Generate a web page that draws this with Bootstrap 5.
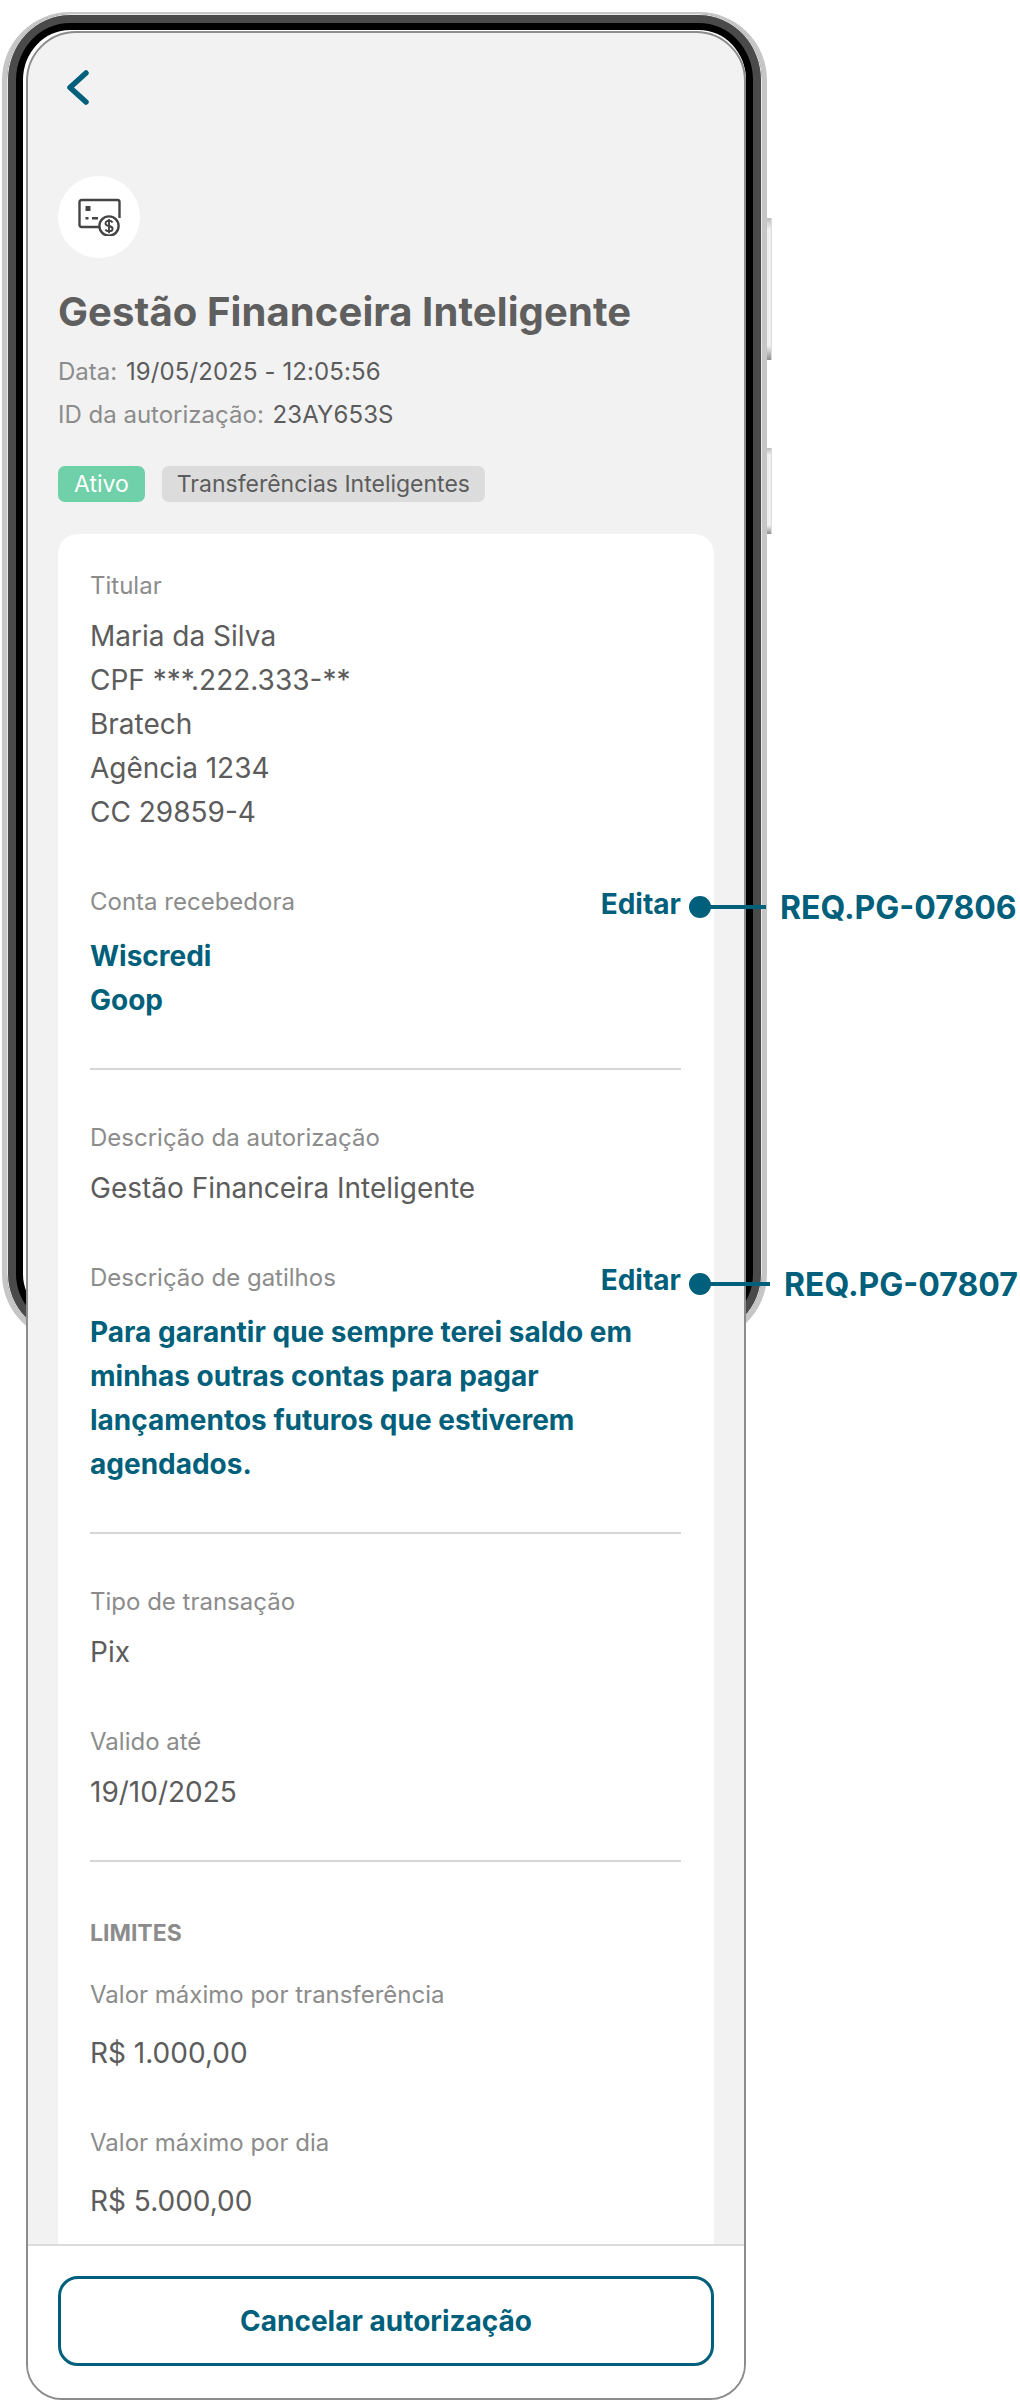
<!DOCTYPE html>
<html lang="pt-BR">
<head>
    <meta charset="UTF-8">
    <meta name="viewport" content="width=device-width, initial-scale=1.0">
    <title>Gestão Financeira Inteligente</title>
    <link href="https://cdn.jsdelivr.net/npm/bootstrap@5.3.3/dist/css/bootstrap.min.css" rel="stylesheet">
    <style>
        body { background: #fff; font-family: "Inter", "Liberation Sans", sans-serif; color: #5c5c5c; }
        .stage { position: relative; width: 1020px; height: 2400px; padding: 31px 0 0 26px; overflow: hidden; }
        .bezel { position: absolute; left: 2px; top: 12px; width: 765px; height: 1330px; border: 5px solid #c6c6c6; border-top-width: 2px; border-radius: 68px; box-shadow: inset 0 0 0 1px #e8e8e8, inset 0 0 0 9px #4a4a4a, inset 0 0 0 16px #000; }
        .side-key { position: absolute; left: 767px; width: 5px; background: linear-gradient(#bdbdbd, #f0f0f0 8%, #f0f0f0 90%, #8e8e8e); border-right: 1px solid #dcdcdc; }
        .side-key-a { top: 218px; height: 142px; }
        .side-key-b { top: 448px; height: 86px; }
        .screen { position: relative; width: 720px; height: 2369px; background: #f2f2f2; border: 2px solid #8c8c8c; border-radius: 50px 50px 36px 36px; overflow: hidden; }
        .screen-scroll { padding: 37px 30px 0; min-height: 0; overflow: hidden; }
        .back-icon { display: block; width: 23px; height: 35px; margin-left: 8px; }
        .icon-circle { width: 82px; height: 82px; margin-top: 71px; background: #fff; }
        .page-title { margin: 30px 0 0; font-size: 40px; line-height: 48px; font-weight: 700; letter-spacing: .1px; color: #5f5f5f; }
        .meta { margin-top: 14px; font-size: 24px; line-height: 43px; color: #5c5c5c; }
        .meta span { margin-right: 2px; color: #8c8c8c; }
        .meta b { font-weight: 400; letter-spacing: .1px; }
        .tags { margin-top: 30px; gap: 17px; }
        .tag { height: 36px; padding: 0 15px; font-size: 23px; font-weight: 400; line-height: 36px; border-radius: 7px; }
        .tag-green { padding: 0 16px; background: #6fd0a9; color: #fff; }
        .tag-grey { background: #dcdcdc; color: #5c5c5c; }
        .detail-card { margin-top: 32px; padding: 36px 33px 60px 32px; background: #fff; border: 0; border-radius: 20px 20px 0 0; }
        .lbl { font-size: 24px; line-height: 32px; color: #8c8c8c; }
        .val { margin-top: 12px; font-size: 28px; line-height: 44px; color: #5c5c5c; }
        .val-bold { margin-top: 16px; font-weight: 700; color: #005f7a; }
        .gap-top { margin-top: 52px; }
        .edit-link { margin: 2px 0 -2px; font-size: 28px; line-height: 32px; font-weight: 700; color: #005f7a; text-decoration: none; }
        .sep { margin: 46px 0 52px; border-top: 2px solid #d6d6d6; opacity: 1; }
        .limits-head { margin-top: 3px; font-size: 23px; line-height: 32px; font-weight: 700; color: #8c8c8c; }
        .limit-lbl { margin-top: 30px; }
        .limit-val { margin-top: 20px; }
        .screen-foot { padding: 30px 30px 0; background: #fff; border-top: 2px solid #dcdcdc; height: 154px; }
        .btn-cancel { height: 90px; border: 3px solid #005f7a; border-radius: 20px; color: #005f7a; background: #fff; font-size: 28px; font-weight: 700; }
        .req-dot { position: absolute; left: 689px; width: 22px; height: 22px; border-radius: 50%; background: #005f7a; }
        .req-line { position: absolute; left: 700px; height: 4px; background: #005f7a; }
        .req-tag { position: absolute; font-size: 32px; line-height: 40px; font-weight: 700; color: #005f7a; white-space: nowrap; }
    </style>
</head>
<body>
    <div class="stage">
        <div class="bezel"></div>
        <div class="side-key side-key-a"></div>
        <div class="side-key side-key-b"></div>

        <div class="screen d-flex flex-column">
            <div class="screen-scroll flex-grow-1">
                <svg class="back-icon" viewBox="0 0 23 35" fill="none" stroke="#005f7a" stroke-width="5.500" stroke-linecap="round" stroke-linejoin="round"><path d="M20 3 4 17.500 20 32"/></svg>
                <div class="icon-circle rounded-circle d-flex align-items-center justify-content-center">
                    <svg width="44" height="38" viewBox="0 0 44 38" fill="none" stroke="#444" stroke-width="2.400">
                        <path d="M22 29H4.500a2 2 0 0 1-2-2V4a2 2 0 0 1 2-2h36a2 2 0 0 1 2 2v16"/>
                        <circle cx="32" cy="28" r="9.600" fill="#fff"/>
                        <path d="M35.600 24.600c-.7-1.200-2-1.800-3.600-1.800-2 0-3.500 1-3.500 2.600s1.500 2.200 3.500 2.600 3.600 1 3.600 2.700-1.600 2.600-3.600 2.600c-1.700 0-3-.7-3.700-1.900M32 21v14.200" stroke-width="1.900"/>
                        <path d="M8.500 8h5v5h-5z" fill="#444" stroke="none"/>
                        <path d="M8.500 19h3v2.500h-3zM15 19h6v2.500h-6z" fill="#444" stroke="none"/>
                    </svg>
                </div>
                <h1 class="page-title">Gestão Financeira Inteligente</h1>
                <div class="meta">
                    <div><span>Data:</span> <b>19/05/2025 - 12:05:56</b></div>
                    <div><span>ID da autorização:</span> <b>23AY653S</b></div>
                </div>
                <div class="tags d-flex">
                    <span class="badge tag tag-green">Ativo</span>
                    <span class="badge tag tag-grey">Transferências Inteligentes</span>
                </div>
                <div class="card detail-card">
                    <div class="lbl">Titular</div>
                    <div class="val">Maria da Silva<br>CPF ***.222.333-**<br>Bratech<br>Agência 1234<br>CC 29859-4</div>

                    <div class="d-flex justify-content-between gap-top">
                        <div class="lbl">Conta recebedora</div>
                        <a class="edit-link" href="#">Editar</a>
                    </div>
                    <div class="val val-bold">Wiscredi<br>Goop</div>
                    <hr class="sep">

                    <div class="lbl">Descrição da autorização</div>
                    <div class="val">Gestão Financeira Inteligente</div>
                    <div class="d-flex justify-content-between gap-top">
                        <div class="lbl">Descrição de gatilhos</div>
                        <a class="edit-link" href="#">Editar</a>
                    </div>
                    <div class="val val-bold">Para garantir que sempre terei saldo em minhas outras contas para pagar lançamentos futuros que estiverem agendados.</div>
                    <hr class="sep">

                    <div class="lbl">Tipo de transação</div>
                    <div class="val">Pix</div>
                    <div class="lbl gap-top">Valido até</div>
                    <div class="val">19/10/2025</div>
                    <hr class="sep">

                    <div class="limits-head">LIMITES</div>
                    <div class="lbl limit-lbl">Valor máximo por transferência</div>
                    <div class="val limit-val">R$ 1.000,00</div>
                    <div class="lbl gap-top">Valor máximo por dia</div>
                    <div class="val limit-val">R$ 5.000,00</div>
                </div>
            </div>
            <div class="screen-foot flex-shrink-0">
                <button type="button" class="btn btn-cancel w-100">Cancelar autorização</button>
            </div>
        </div>

        <div class="req-dot" style="top: 896px"></div>
        <div class="req-line" style="top: 905px; width: 66px"></div>
        <div class="req-tag" style="left: 780px; top: 888px">REQ.PG-07806</div>
        <div class="req-dot" style="top: 1273px"></div>
        <div class="req-line" style="top: 1282px; width: 70px"></div>
        <div class="req-tag" style="left: 784px; top: 1265px">REQ.PG-07807</div>
    </div>
    <script src="https://cdn.jsdelivr.net/npm/bootstrap@5.3.3/dist/js/bootstrap.bundle.min.js"></script>
</body>
</html>
